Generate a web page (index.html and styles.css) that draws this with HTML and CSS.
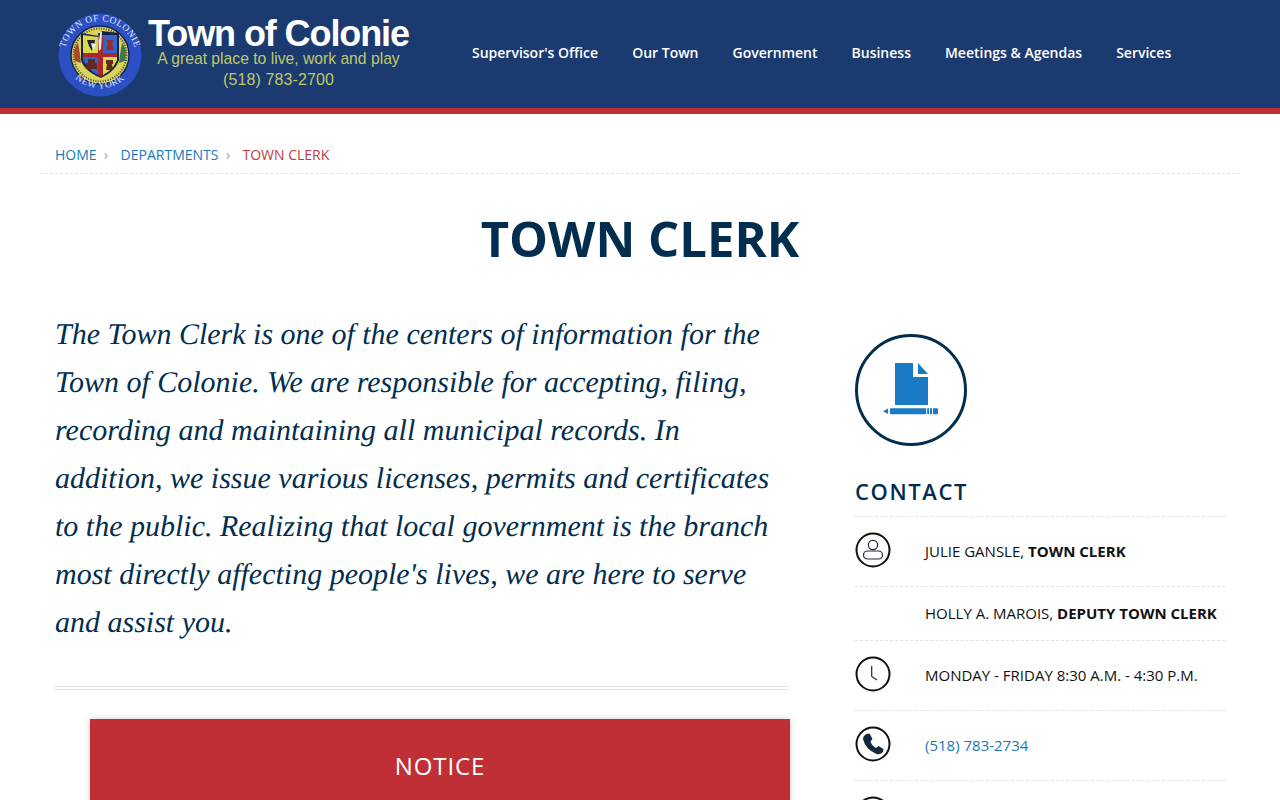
FILE: index.html
```
<!DOCTYPE html>
<html lang="en">
<head>
<meta charset="utf-8">
<title>Town Clerk - Town of Colonie</title>
<link rel="stylesheet" href="styles.css">
</head>
<body>
<header class="site-header">
  <a class="brand" href="#">
    <svg class="seal" viewBox="0 0 84 84" width="84" height="84" aria-hidden="true">
      <defs>
        <path id="arcTop" d="M6.500 50 A36 36 0 1 1 77.500 50"/>
        <path id="arcBottom" d="M14 62 A36 36 0 0 0 70 62"/>
      </defs>
      <circle cx="42" cy="42" r="41.500" fill="#2b50c4"/>
      <circle cx="42" cy="42" r="29" fill="#d8d45c" stroke="#14244f" stroke-width="1.500"/>
      <circle cx="42" cy="42" r="26.500" fill="none" stroke="#5f5a3a" stroke-width="2" stroke-dasharray="1.200 1.300"/>
      <text class="seal-text"><textPath href="#arcTop" startOffset="50%" text-anchor="middle">TOWN OF COLONIE</textPath></text>
      <text class="seal-text"><textPath href="#arcBottom" startOffset="50%" text-anchor="middle">NEW YORK</textPath></text>
      <path d="M17 48 Q14 36 20 30 Q22 40 23 50 Z" fill="#a9472c"/>
      <path d="M67 48 Q70 36 64 30 Q62 40 61 50 Z" fill="#3f7a45"/>
      <path d="M23 20 L41 23 L44 18 L61 20 L61 47 Q58 58 43 65 Q26 58 23 47 Z" fill="#17224a"/>
      <path d="M25 22 L40 24 L40 40 L25 40 Z" fill="#dcd84e"/>
      <path d="M45 22 L59 22 L59 40 L45 40 Z" fill="#3563c9"/>
      <path d="M25 44 L40 44 L40 62 Q29 56 25 47 Z" fill="#3563c9"/>
      <path d="M45 44 L59 44 L59 47 Q55 57 45 62 Z" fill="#dcd84e"/>
      <path d="M40 40 H25 V44 H40 V62 L43 64 L45 62 V44 H59 V40 H45 V22 H40 Z" fill="#a8282d"/>
      <path d="M29 27 L37 27 L36 33 L34 38 L31 33 Z" fill="#20242c"/>
      <path d="M33 30 L38 31 L35 38 Z" fill="#eee"/>
      <path d="M40 20 L44 19 L43 36 L41 38 Z" fill="#f1f1f1"/>
      <path d="M40 20 L42 20 L41 28 Z" fill="#14161c"/>
      <path d="M48 37 L50 31 L48.500 27 H55.500 L54 31 L56 37 Z" fill="#9c2a2a"/>
      <path d="M28 56 V50 H30 V46 H37 V50 H39 V56 Z" fill="#5e2a24"/>
      <path d="M48 57 L49 51 H48 V47 H55 V51 H54 L55 57 Z" fill="#5e2a24"/>
    </svg>
    <span class="brand-text">
      <span class="brand-name">Town of Colonie</span>
      <span class="brand-tag">A great place to live, work and play</span>
      <span class="brand-phone">(518) 783-2700</span>
    </span>
  </a>
  <nav class="main-nav">
    <a href="#">Supervisor's Office</a>
    <a href="#">Our Town</a>
    <a href="#">Government</a>
    <a href="#">Business</a>
    <a href="#">Meetings &amp; Agendas</a>
    <a href="#">Services</a>
  </nav>
</header>

<div class="breadcrumb-bar">
  <a href="#">Home</a><span class="sep">›</span>
  <a href="#">Departments</a><span class="sep">›</span>
  <span class="current">Town Clerk</span>
</div>

<h1 class="page-title">Town Clerk</h1>

<div class="columns">
  <main class="main-col">
    <p class="intro">The Town Clerk is one of the centers of information for the Town of Colonie. We are responsible for accepting, filing, recording and maintaining all municipal records. In addition, we issue various licenses, permits and certificates to the public. Realizing that local government is the branch most directly affecting people's lives, we are here to serve and assist you.</p>
    <hr class="double-rule">
    <section class="notice">
      <h2>Notice</h2>
    </section>
  </main>

  <aside class="side-col">
    <div class="dept-icon">
      <svg viewBox="0 0 56 56" width="56" height="56" aria-hidden="true">
        <path d="M12 1 H30 V15 H45 V43 H12 Z" fill="#1a7ac4"/>
        <path d="M35 1 L45 12 H35 Z" fill="#1a7ac4"/>
        <path d="M0 49.300 L5 46.500 V52 Z" fill="#1a7ac4"/>
        <rect x="7" y="46.300" width="48" height="6" rx="1" fill="#1a7ac4"/>
        <path d="M43.700 46 V53 M46.500 46 V53 M49.500 46 V53" stroke="#fff" stroke-width="1"/>
      </svg>
    </div>
    <h2 class="contact-title">Contact</h2>
    <ul class="contact-list">
      <li class="row tall">
        <span class="round-icon">
          <svg viewBox="0 0 36 36" width="36" height="36" aria-hidden="true"><circle cx="18" cy="18" r="16.500" fill="none" stroke="#111" stroke-width="2"/><circle cx="18" cy="13" r="4.600" fill="none" stroke="#1c2b3a" stroke-width="1.200"/><rect x="8.500" y="19" width="19" height="8" rx="4" fill="none" stroke="#1c2b3a" stroke-width="1.200"/></svg>
        </span>
        <span class="row-text">Julie Gansle, <b>Town Clerk</b></span>
      </li>
      <li class="row short">
        <span class="round-icon"></span>
        <span class="row-text">Holly A. Marois, <b>Deputy Town Clerk</b></span>
      </li>
      <li class="row tall">
        <span class="round-icon">
          <svg viewBox="0 0 36 36" width="36" height="36" aria-hidden="true"><circle cx="18" cy="18" r="16.500" fill="none" stroke="#111" stroke-width="2"/><path d="M16.700 10 V20.500 L22 24" fill="none" stroke="#1c2b3a" stroke-width="1.200"/></svg>
        </span>
        <span class="row-text">Monday - Friday 8:30 a.m. - 4:30 p.m.</span>
      </li>
      <li class="row tall">
        <span class="round-icon">
          <svg viewBox="0 0 36 36" width="36" height="36" aria-hidden="true"><circle cx="18" cy="18" r="16.500" fill="none" stroke="#111" stroke-width="2"/><path d="M11.500 8 L14.500 7.500 L17.500 13 L15.500 15.500 Q17 20 21 22 L23.500 20 L28.500 23 L28 26 Q25 29 21.500 28 Q10.500 23.500 8 13 Q8 10 11.500 8 Z" fill="#14293d"/></svg>
        </span>
        <a class="row-text link" href="#">(518) 783-2734</a>
      </li>
      <li class="row tall">
        <span class="round-icon">
          <svg viewBox="0 0 36 36" width="36" height="36" aria-hidden="true"><circle cx="18" cy="18" r="16.500" fill="none" stroke="#111" stroke-width="2"/></svg>
        </span>
        <span class="row-text"></span>
      </li>
    </ul>
  </aside>
</div>
</body>
</html>
```
FILE: styles.css
```
* { box-sizing: border-box; }
html, body { margin: 0; padding: 0; }
body {
  background: #fff;
  color: #111;
  font-family: "Open Sans", "Liberation Sans", sans-serif;
  width: 1280px;
  height: 800px;
  overflow: hidden;
}
a { text-decoration: none; color: inherit; }

.site-header {
  height: 114px;
  background: #1b3a70;
  border-bottom: 6px solid #bf2f35;
  display: flex;
  align-items: flex-start;
}
.brand {
  display: flex;
  margin-left: 58px;
  padding-top: 13px;
  width: 397px;
  flex: none;
}
.seal { flex: none; }
.seal-text {
  font-family: "Liberation Serif", serif;
  font-size: 9.500px;
  letter-spacing: .5px;
  fill: #e3e9fb;
}
.brand-text {
  display: flex;
  flex-direction: column;
  align-items: center;
  margin-left: 6px;
  margin-top: 2px;
  width: 261px;
  white-space: nowrap;
  font-family: "Liberation Sans", Arial, sans-serif;
}
.brand-name {
  color: #fff;
  font-size: 36px;
  font-weight: 700;
  letter-spacing: -1.100px;
  line-height: 37px;
}
.brand-tag {
  color: #bfc96c;
  font-size: 15.700px;
  line-height: 14px;
}
.brand-phone {
  color: #bfc96c;
  font-size: 16px;
  letter-spacing: .1px;
  line-height: 20px;
  margin-top: 4px;
}
.main-nav {
  display: flex;
  gap: 34px;
  margin-left: 17px;
  padding-top: 43px;
  font-size: 14px;
  font-weight: 600;
  color: #fff;
  line-height: 20px;
}

.breadcrumb-bar {
  margin: 0 40px;
  height: 60px;
  padding: 31px 15px 0;
  border-bottom: 1px dashed #e2e2e2;
  font-size: 14px;
  line-height: 20px;
  text-transform: uppercase;
  color: #1879b9;
  display: flex;
}
.sep {
  color: #c4c4c4;
  font-weight: 700;
  width: 24px;
  text-align: left;
  padding-left: 7px;
}
.current { color: #bf3a40; }

.page-title {
  margin: 34px 0 0;
  height: 62px;
  text-align: center;
  font-size: 49px;
  line-height: 60px;
  font-weight: 700;
  text-transform: uppercase;
  color: #012e4f;
}

.columns {
  display: flex;
  padding: 0 55px;
}
.main-col { width: 735px; flex: none; }
.intro {
  margin: 41px 0 0;
  font-family: "Liberation Serif", "Times New Roman", serif;
  font-style: italic;
  font-size: 30px;
  line-height: 48px;
  color: #012e4f;
  text-rendering: geometricPrecision;
}
.double-rule {
  margin: 39px 1px 0 0;
  height: 4px;
  border: 0;
  border-top: 1px solid #e2e2e2;
  border-bottom: 1px solid #e2e2e2;
}
.notice {
  margin: 29px 0 0 35px;
  width: 700px;
  height: 200px;
  background: #bf2f35;
  box-shadow: 0 0 6px rgba(0,0,0,.2);
  padding-top: 30px;
  text-align: center;
}
.notice h2 {
  margin: 0;
  font-size: 24px;
  line-height: 34px;
  font-weight: 400;
  letter-spacing: .9px;
  color: #fff;
  text-transform: uppercase;
}

.side-col { width: 370px; margin-left: 65px; flex: none; padding-top: 64px; }
.dept-icon {
  width: 112px;
  height: 112px;
  border: 3px solid #012e4f;
  border-radius: 50%;
  display: flex;
  align-items: center;
  justify-content: center;
}
.contact-title {
  margin: 29px 0 0;
  font-size: 22px;
  line-height: 32px;
  font-weight: 600;
  letter-spacing: 1.600px;
  color: #012e4f;
  text-transform: uppercase;
  padding-bottom: 9px;
}
.contact-list { list-style: none; margin: 0; padding: 0; border-top: 1px dashed #e2e2e2; }
.row {
  display: flex;
  border-bottom: 1px dashed #e2e2e2;
  font-size: 15px;
  line-height: 20px;
  text-transform: uppercase;
  color: #111;
}
.row.tall { height: 70px; padding-top: 15px; }
.row.short { height: 54px; padding-top: 16px; }
.round-icon { width: 70px; flex: none; height: 36px; display: block; }
.round-icon svg { display: block; }
.row-text { padding-top: 9px; }
.row.short .row-text { padding-top: 0; }
.row-text b { font-weight: 700; }
.link { color: #1879b9; }
```
